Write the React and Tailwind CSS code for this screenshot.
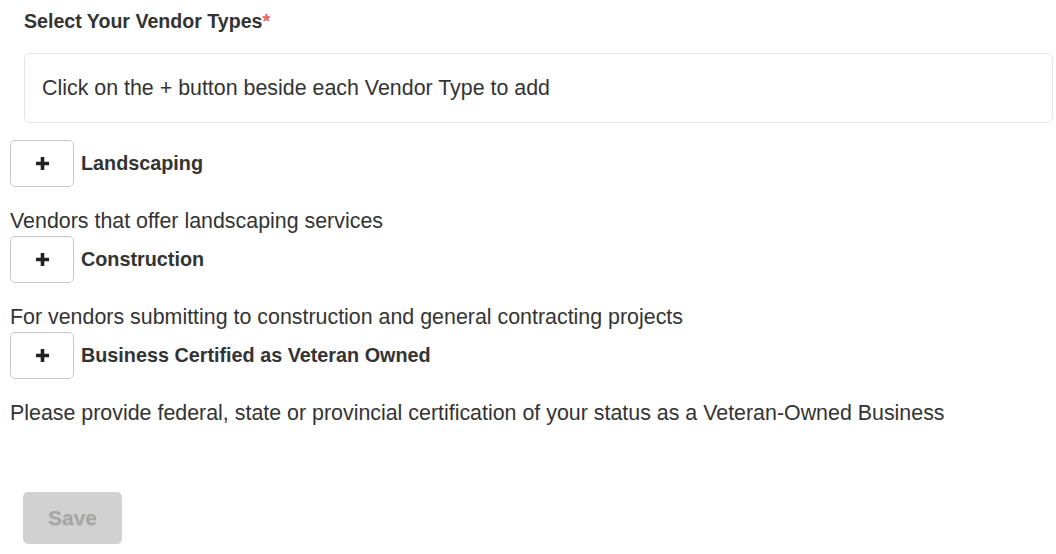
const vendorTypes = [
  { name: 'Landscaping', desc: 'Vendors that offer landscaping services' },
  { name: 'Construction', desc: 'For vendors submitting to construction and general contracting projects' },
  {
    name: 'Business Certified as Veteran Owned',
    desc: 'Please provide federal, state or provincial certification of your status as a Veteran-Owned Business',
  },
]

function PlusButton() {
  return (
    <button className="w-[64px] h-[47px] flex items-center justify-center bg-white border border-[#c8c8c8] rounded-[5px] shrink-0">
      <svg width="15" height="15" viewBox="0 0 15 15">
        <path d="M7.5 1v13M1 7.5h13" stroke="#222" strokeWidth="3.6" />
      </svg>
    </button>
  )
}

export default function App() {
  return (
    <div className="min-h-screen bg-white text-[#333] font-['Liberation_Sans',Arial,sans-serif]">
      {/* Header */}
      <div className="pl-[24px] pr-[3px] pt-[10px]">
        <h2 className="text-[19.6px] leading-[22px] font-bold">
          Select Your Vendor Types<span className="text-[#f05a5a]">*</span>
        </h2>
        <div className="mt-[21px] h-[70px] flex items-center px-[17px] border border-[#e6e6e6] rounded-[6px] text-[21.4px]">
          Click on the + button beside each Vendor Type to add
        </div>
      </div>

      {/* Vendor types */}
      <div className="px-[10px] pt-[17px]">
        {vendorTypes.map((v) => (
          <div key={v.name}>
            <div className="flex items-center gap-[7px] h-[47px]">
              <PlusButton />
              <span className="text-[19.8px] font-bold">{v.name}</span>
            </div>
            <p className="mt-[22px] mb-[3px] text-[21.4px] leading-[24px]">{v.desc}</p>
          </div>
        ))}
      </div>

      {/* Save */}
      <div className="px-[23px] pt-[64px]">
        <button className="w-[99px] h-[52px] rounded-[5px] bg-[#d1d1d1] text-[#a6a6a6] text-[21px] font-bold [text-shadow:0_1px_1px_rgba(0,0,0,0.08)]">
          Save
        </button>
      </div>
    </div>
  )
}
